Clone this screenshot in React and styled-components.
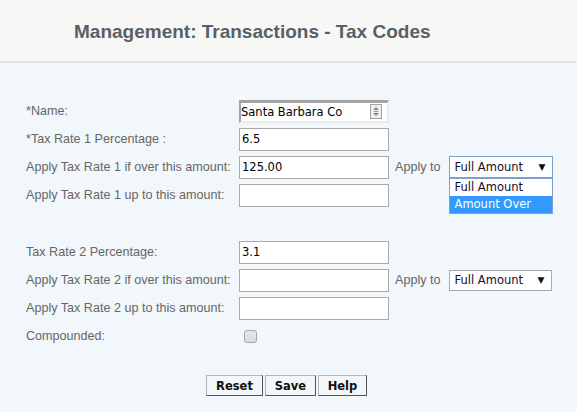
import React from "react";
import styled, { createGlobalStyle } from "styled-components";

const Global = createGlobalStyle`
  html, body {
    margin: 0;
    padding: 0;
    background: #f2f7fb;
    font-family: "Liberation Sans", Arial, sans-serif;
  }
`;

const Page = styled.div`
  width: 577px;
  min-height: 412px;
  background: #f2f7fb;
`;

const Header = styled.div`
  height: 61px;
  background: #f7f7f5;
  border-bottom: 2px solid #e4e4e0;
  display: flex;
  align-items: center;
  padding-left: 74px;
`;

const Title = styled.h1`
  margin: 0;
  font-size: 19px;
  font-weight: bold;
  color: #596065;
  padding-top: 2px;
`;

const Form = styled.div`
  padding: 37px 0 0 26px;
  display: flex;
  flex-direction: column;
  gap: 6px;
`;

const Row = styled.div`
  display: flex;
  align-items: center;
  height: 22px;
  margin-top: ${(p) => p.$gap || 0}px;
  position: relative;
`;

const Label = styled.div`
  width: 213px;
  font-size: 12.6px;
  color: #666;
  white-space: nowrap;
`;

const Input = styled.div`
  box-sizing: border-box;
  width: 150px;
  height: 23px;
  background: #fff;
  border: 1px solid #a9a9a9;
  font-family: "DejaVu Sans", Tahoma, sans-serif;
  font-size: 11.5px;
  color: #000;
  display: flex;
  align-items: center;
  padding-left: 2px;
`;

const InsetInput = styled(Input)`
  border-top: 3px solid #a3a3a3;
  border-left: 2px solid #a3a3a3;
  border-bottom: 2px solid #ebebeb;
  border-right: 2px solid #ebebeb;
  padding-left: 0;
  justify-content: space-between;
  padding-right: 5px;
`;

const Spinner = styled.span`
  box-sizing: border-box;
  width: 12px;
  height: 15px;
  border: 1px solid #a0a0a0;
  background: #f0f0f0;
  display: flex;
  align-items: center;
  justify-content: center;
`;

const ApplyTo = styled.span`
  font-size: 12.6px;
  color: #666;
  margin: 0 8px 0 6px;
`;

const SelectWrap = styled.div`
  position: relative;
`;

const Select = styled.div`
  box-sizing: border-box;
  width: ${(p) => (p.$focused ? 104 : 103)}px;
  height: ${(p) => (p.$focused ? 22 : 21)}px;
  background: #fff;
  border: 1px solid ${(p) => (p.$focused ? "#7d9fd6" : "#a9a9a9")};
  font-family: "DejaVu Sans", Tahoma, sans-serif;
  font-size: 11.5px;
  color: #1a0a2a;
  display: flex;
  align-items: center;
  justify-content: space-between;
  padding: 0 6px 0 5px;
`;

const Arrow = styled.span`
  font-size: 9px;
  color: #111;
`;

const Menu = styled.div`
  position: absolute;
  top: 22px;
  left: 0;
  box-sizing: border-box;
  width: 104px;
  background: #fff;
  border: 1px solid #7d9fd6;
  font-family: "DejaVu Sans", Tahoma, sans-serif;
  font-size: 11.5px;
  z-index: 2;
`;

const Option = styled.div`
  height: 17px;
  line-height: 17px;
  padding-left: 5px;
  background: ${(p) => (p.$active ? "#3399ff" : "#fff")};
  color: ${(p) => (p.$active ? "#fff" : "#1a0a2a")};
`;

const Check = styled.span`
  box-sizing: border-box;
  width: 13px;
  height: 13px;
  margin-left: 5px;
  border: 1px solid #a6a6a6;
  border-radius: 3px;
  background: linear-gradient(#e6e6e6, #dcdcdc);
`;

const Buttons = styled.div`
  display: flex;
  justify-content: center;
  gap: 2px;
  margin-top: 28px;
  padding-right: 4px;
  padding-bottom: 16px;
`;

const Button = styled.button`
  box-sizing: border-box;
  width: ${(p) => p.$w}px;
  height: 21px;
  padding: 0;
  font-family: "DejaVu Sans", Tahoma, sans-serif;
  font-size: 11.5px;
  font-weight: bold;
  color: #111;
  background: #f3f7fa;
  border: 1px solid;
  border-color: #b5b5b5 #555 #555 #b5b5b5;
  border-radius: 0;
`;

const rows1 = [
  { label: "*Tax Rate 1 Percentage :", value: "6.5" },
  { label: "Apply Tax Rate 1 if over this amount:", value: "125.00", apply: true, open: true },
  { label: "Apply Tax Rate 1 up to this amount:", value: "" },
];

const rows2 = [
  { label: "Tax Rate 2 Percentage:", value: "3.1" },
  { label: "Apply Tax Rate 2 if over this amount:", value: "", apply: true },
  { label: "Apply Tax Rate 2 up to this amount:", value: "" },
];

function FieldRow({ row, gap }) {
  return (
    <Row $gap={gap}>
      <Label>{row.label}</Label>
      <Input>{row.value}</Input>
      {row.apply && (
        <>
          <ApplyTo>Apply to</ApplyTo>
          <SelectWrap>
            <Select $focused={row.open}>
              Full Amount <Arrow>▼</Arrow>
            </Select>
            {row.open && (
              <Menu>
                <Option>Full Amount</Option>
                <Option $active>Amount Over</Option>
              </Menu>
            )}
          </SelectWrap>
        </>
      )}
    </Row>
  );
}

export default function App() {
  return (
    <Page>
      <Global />
      <Header>
        <Title>Management: Transactions - Tax Codes</Title>
      </Header>
      <Form>
        <Row>
          <Label>*Name:</Label>
          <InsetInput>
            Santa Barbara Co
            <Spinner>
              <svg width="6" height="9" viewBox="0 0 6 9">
                <path d="M3 0 L6 3 L0 3 Z" fill="#888" />
                <rect x="1" y="4" width="4" height="1" fill="#888" />
                <path d="M0 6 L6 6 L3 9 Z" fill="#888" />
              </svg>
            </Spinner>
          </InsetInput>
        </Row>
        {rows1.map((r) => (
          <FieldRow key={r.label} row={r} />
        ))}
        {rows2.map((r, i) => (
          <FieldRow key={r.label} row={r} gap={i === 0 ? 29 : 0} />
        ))}
        <Row>
          <Label>Compounded:</Label>
          <Check />
        </Row>
      </Form>
      <Buttons>
        <Button $w={57}>Reset</Button>
        <Button $w={51}>Save</Button>
        <Button $w={49}>Help</Button>
      </Buttons>
    </Page>
  );
}
